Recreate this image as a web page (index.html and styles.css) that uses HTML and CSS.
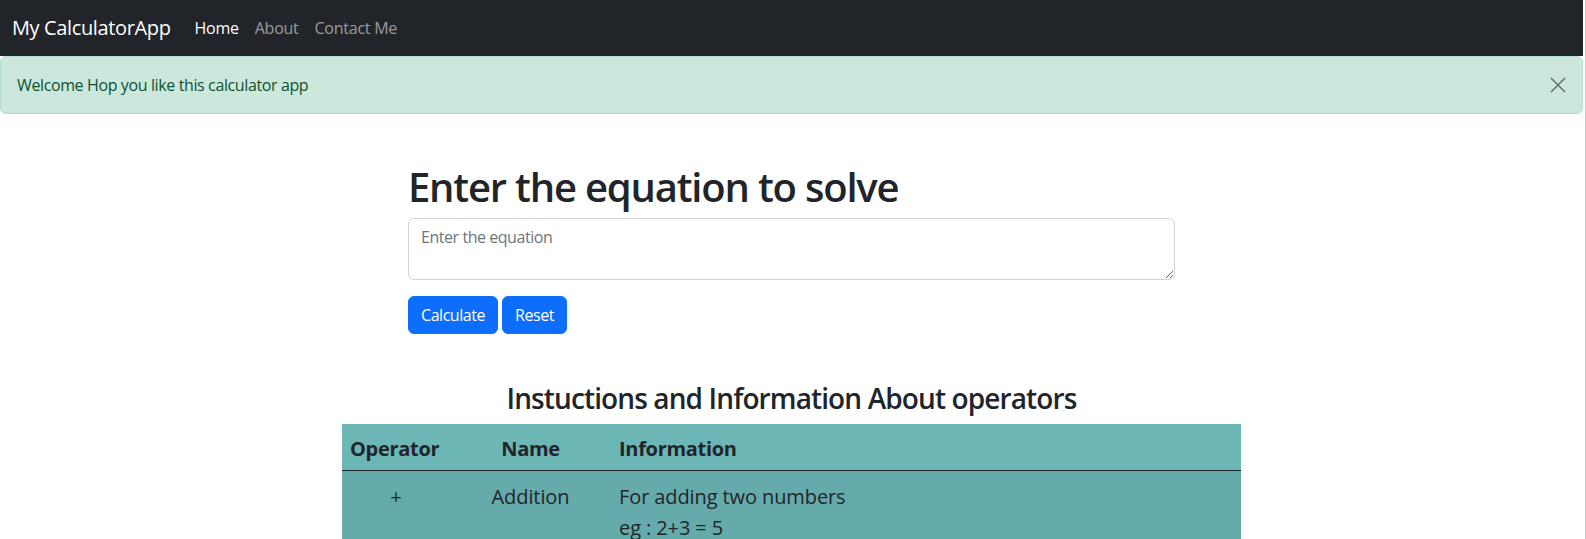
FILE: index.html
```html
<!DOCTYPE html>
<html lang="en">
<head>
<meta charset="utf-8">
<title>My CalculatorApp</title>
<link rel="stylesheet" href="styles.css">
</head>
<body>
<div class="page">
  <nav class="navbar">
    <a class="brand" href="#">My CalculatorApp</a>
    <ul class="nav">
      <li><a class="nav-link active" href="#">Home</a></li>
      <li><a class="nav-link" href="#">About</a></li>
      <li><a class="nav-link" href="#">Contact Me</a></li>
    </ul>
  </nav>

  <div class="alert">
    <span class="alert-text">Welcome Hop you like this calculator app</span>
    <button class="btn-close" type="button" aria-label="Close">
      <svg viewBox="0 0 16 16" width="16" height="16"><path d="M1 1 L15 15 M15 1 L1 15" stroke="#000" stroke-width="1.6" fill="none"/></svg>
    </button>
  </div>

  <main class="solver">
    <h1 class="title">Enter the equation to solve</h1>
    <textarea class="equation" rows="2" placeholder="Enter the equation"></textarea>
    <div class="actions">
      <button class="btn" type="button">Calculate</button>
      <button class="btn" type="button">Reset</button>
    </div>
  </main>

  <section class="info">
    <h3 class="info-title">Instuctions and Information About operators</h3>
    <table class="ops">
      <thead>
        <tr>
          <th class="c-op">Operator</th>
          <th class="c-name">Name</th>
          <th class="c-info">Information</th>
        </tr>
      </thead>
      <tbody>
        <tr>
          <td class="c-op center">+</td>
          <td class="c-name center">Addition</td>
          <td class="c-info">For adding two numbers<br>eg : 2+3 = 5</td>
        </tr>
      </tbody>
    </table>
  </section>
</div>
</body>
</html>
```

FILE: styles.css
```css
* { box-sizing: border-box; }
html, body { margin: 0; padding: 0; }
body {
  font-family: "Open Sans", "Noto Sans", "Liberation Sans", sans-serif;
  font-size: 16px;
  line-height: 1.5;
  color: #212529;
  background: #fff;
  border-right: 1px solid #c9c9c9;
  padding-right: 2px;
  min-height: 539px;
  overflow: hidden;
}
.page { width: 100%; }

.navbar {
  background: #212529;
  height: 56px;
  padding: 8px 12px;
  display: flex;
  align-items: center;
}
.brand {
  color: #fff;
  text-decoration: none;
  font-size: 20px;
  letter-spacing: -0.37px;
  line-height: 30px;
  padding: 5px 0;
  margin-right: 16px;
}
.nav {
  list-style: none;
  margin: 0;
  padding: 0;
  display: flex;
}
.nav-link {
  display: block;
  padding: 8px;
  color: rgba(255,255,255,.55);
  text-decoration: none;
  line-height: 24px;
  letter-spacing: -0.25px;
}
.nav-link.active { color: #fff; }

.alert {
  position: relative;
  background: #cce8dd;
  color: #0f5132;
  border: 1px solid #b6dccb;
  border-radius: 6px;
  padding: 16px 48px 16px 16px;
  line-height: 24px;
}
.alert-text { letter-spacing: -0.38px; }
.btn-close {
  position: absolute;
  top: 0;
  right: 0;
  border: 0;
  background: transparent;
  padding: 20px 16px;
  width: 48px;
  height: 56px;
  opacity: .5;
  display: flex;
  align-items: center;
  justify-content: center;
}

.solver {
  width: 767px;
  margin: 47px auto 0;
}
.title {
  margin: 0 0 7px;
  padding-top: 2px;
  font-size: 40px;
  font-weight: 600;
  letter-spacing: -1.2px;
  line-height: 48px;
}
.equation {
  display: block;
  width: 100%;
  height: 62px;
  padding: 6px 12px;
  font-family: inherit;
  font-size: 16px;
  line-height: 24px;
  letter-spacing: -0.45px;
  border: 1px solid #ced4da;
  border-radius: 6px;
  color: #212529;
  resize: vertical;
}
.equation::placeholder { color: #6c757d; }
.actions {
  margin-top: 16px;
  display: flex;
  gap: 4px;
}
.btn {
  font-family: inherit;
  font-size: 16px;
  line-height: 24px;
  letter-spacing: -0.45px;
  padding: 6px 12px;
  color: #fff;
  background: #0d6efd;
  border: 1px solid #0d6efd;
  border-radius: 6px;
}

.info {
  width: 899px;
  margin: 48px auto 0;
}
.info-title {
  margin: 0 0 8px;
  font-size: 28px;
  font-weight: 600;
  letter-spacing: -0.88px;
  line-height: 1.2;
  text-align: center;
}
.ops {
  width: 100%;
  border-collapse: collapse;
  font-size: 20px;
  line-height: 30px;
  color: #212529;
}
.ops th, .ops td {
  padding: 10px 8px 6px;
  vertical-align: top;
  text-align: left;
}
.ops thead tr { background: #6cb6b5; }
.ops thead th {
  border-bottom: 1px solid #212529;
  font-weight: 700;
  letter-spacing: -0.3px;
}
.ops tbody tr { background: #66abab; }
.ops tbody td {
  line-height: 31px;
  letter-spacing: -0.1px;
}
.c-op { width: 108px; }
.c-name { width: 161px; text-align: center !important; }
.center { text-align: center !important; }
```
